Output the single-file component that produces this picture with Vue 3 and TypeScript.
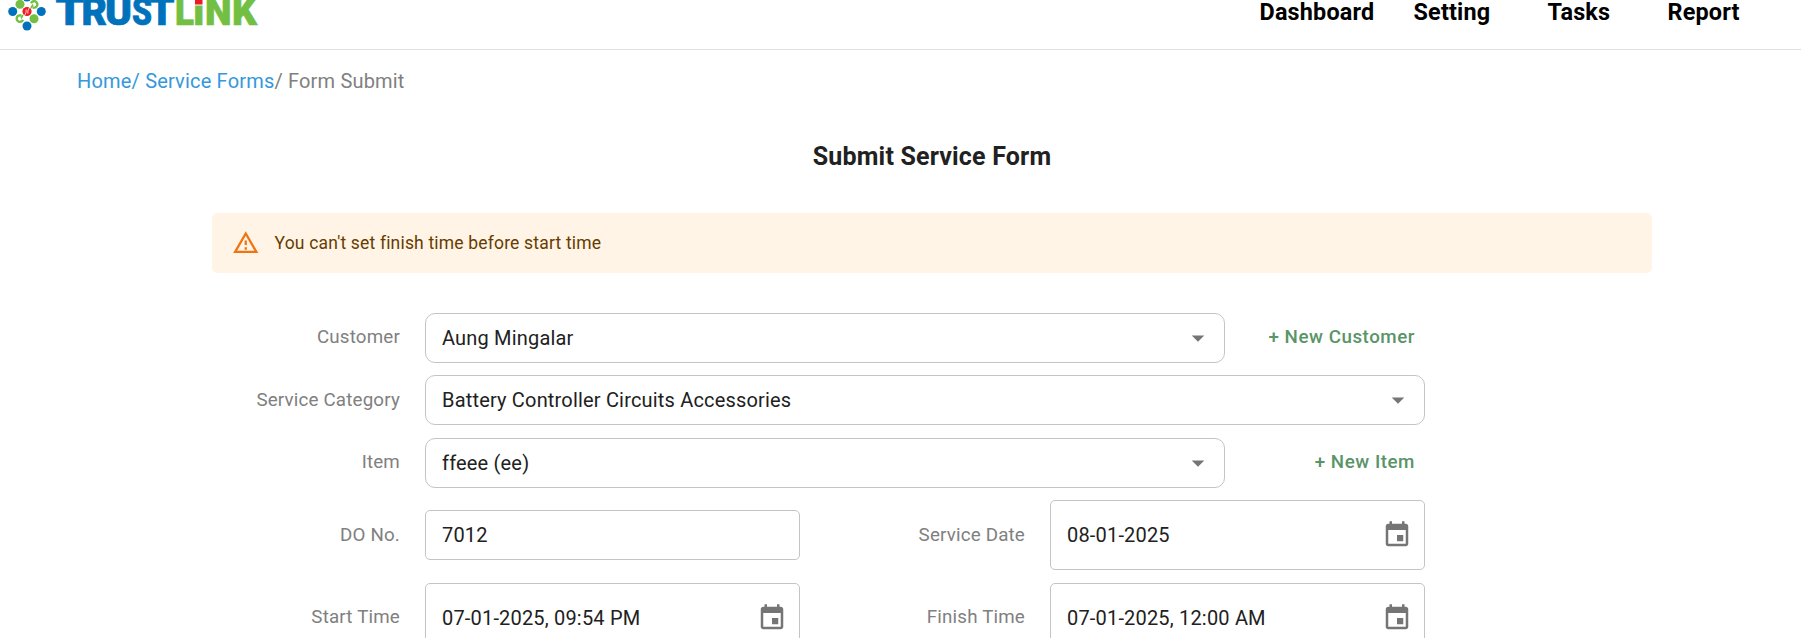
<script setup lang="ts">
interface NavItem {
  label: string
  slug: string
}

const navItems: NavItem[] = [
  { label: 'Dashboard', slug: 'dashboard' },
  { label: 'Setting', slug: 'setting' },
  { label: 'Tasks', slug: 'tasks' },
  { label: 'Report', slug: 'report' },
]

interface LogoLetter {
  char: string
  x: number
  width: number
  color: string
}

const blue = '#0072bc'
const green = '#72bf44'

const logoLetters: LogoLetter[] = [
  { char: 'T', x: 55.5, width: 28.5, color: blue },
  { char: 'R', x: 81.5, width: 25.5, color: blue },
  { char: 'U', x: 105, width: 27, color: blue },
  { char: 'S', x: 132, width: 20, color: blue },
  { char: 'T', x: 149.5, width: 25, color: blue },
  { char: 'L', x: 175, width: 19, color: green },
  { char: 'I', x: 193, width: 11.5, color: green },
  { char: 'N', x: 205, width: 26.5, color: green },
  { char: 'K', x: 232, width: 25, color: green },
]

interface SelectRow {
  label: string
  value: string
  action?: string
}

const selectRows: SelectRow[] = [
  { label: 'Customer', value: 'Aung Mingalar', action: '+ New Customer' },
  { label: 'Service Category', value: 'Battery Controller Circuits Accessories' },
  { label: 'Item', value: 'ffeee (ee)', action: '+ New Item' },
]

interface Field {
  label: string
  value: string
  picker: boolean
}

const fieldRows: Field[][] = [
  [
    { label: 'DO No.', value: '7012', picker: false },
    { label: 'Service Date', value: '08-01-2025', picker: true },
  ],
  [
    { label: 'Start Time', value: '07-01-2025, 09:54 PM', picker: true },
    { label: 'Finish Time', value: '07-01-2025, 12:00 AM', picker: true },
  ],
]

const eventIcon =
  'M17 12h-5v5h5v-5zM16 1v2H8V1H6v2H5c-1.11 0-1.99.9-1.99 2L3 19c0 1.1.89 2 2 2h14c1.1 0 2-.9 2-2V5c0-1.1-.9-2-2-2h-1V1h-2zm3 18H5V8h14v11z'
</script>

<template>
  <div class="page">
    <header class="topbar">
      <svg class="logo" width="270" height="40" viewBox="0 0 270 40">
        <g :fill="blue">
          <circle cx="27" cy="-3" r="4.5" />
          <circle cx="12.7" cy="11.5" r="4.5" />
          <circle cx="41.3" cy="11.5" r="4.5" />
          <circle cx="27" cy="26" r="4.5" />
        </g>
        <g :fill="green">
          <circle cx="20" cy="4.3" r="4.5" />
          <circle cx="34" cy="18.700" r="4.5" />
        </g>
        <g :stroke="green" stroke-width="2.4" fill="none">
          <path d="M31 3.200A3.300 3.300 0 1 1 35.500 7.400L32.500 7.800" />
          <path d="M23 19.800A3.300 3.300 0 1 1 18.500 15.600L21.500 15.200" />
          <path d="M33 4.500L31 8M21 18.500L23 15" stroke-width="1.6" />
        </g>
        <circle cx="27" cy="11.5" r="4.6" fill="#ed1c24" />
        <path d="M24.500 15.500Q26.500 13 26.300 9.500M29.500 7.500Q27.500 10 27.800 13.500" fill="none" stroke="#fff" stroke-opacity="0.75" stroke-width="1" />
        <g class="wordmark">
          <text
            v-for="letter in logoLetters"
            :key="letter.x"
            :x="letter.x"
            y="25.200"
            :textLength="letter.width"
            lengthAdjust="spacingAndGlyphs"
            :fill="letter.color"
            :stroke="letter.color"
          >{{ letter.char }}</text>
        </g>
        <rect x="193.500" y="0" width="10" height="5.500" fill="#fff" />
        <rect x="195" y="0" width="7.500" height="4.500" fill="#ed1c24" />
      </svg>
      <nav class="nav">
        <a v-for="item in navItems" :key="item.slug" :class="['nav-item', item.slug]">{{ item.label }}</a>
      </nav>
    </header>

    <div class="breadcrumb"><a>Home/</a>&nbsp;<a>Service Forms</a>/ Form Submit</div>

    <main class="content">
      <h1 class="title">Submit Service Form</h1>

      <div class="alert">
        <svg class="alert-icon" viewBox="0 0 24 24">
          <path d="M12 5.990L19.530 19H4.470L12 5.990M12 2L1 21h22L12 2zm1 14h-2v2h2v-2zm0-6h-2v4h2v-4z" />
        </svg>
        <span>You can't set finish time before start time</span>
      </div>

      <form class="form">
        <div v-for="row in selectRows" :key="row.label" class="row">
          <label class="label">{{ row.label }}</label>
          <div class="control select">
            <span>{{ row.value }}</span>
            <svg class="icon" viewBox="0 0 24 24"><path d="M7 10l5 5 5-5z" /></svg>
          </div>
          <a v-if="row.action" class="action">{{ row.action }}</a>
        </div>

        <div v-for="(fields, i) in fieldRows" :key="i" class="row pair">
          <template v-for="field in fields" :key="field.label">
            <label class="label">{{ field.label }}</label>
            <div :class="['control', { picker: field.picker }]">
              <span>{{ field.value }}</span>
              <svg v-if="field.picker" class="icon" viewBox="0 0 24 24"><path :d="eventIcon" /></svg>
            </div>
          </template>
        </div>
      </form>
    </main>
  </div>
</template>

<style>
body {
  overflow: hidden;
}
</style>

<style scoped>
.page {
  box-sizing: border-box;
  width: 1801px;
  height: 638px;
  overflow: hidden;
  background: #fff;
  font-family: Roboto, "Liberation Sans", sans-serif;
  font-size: 20px;
  letter-spacing: 0.18px;
  color: #212121;
}
.topbar {
  box-sizing: border-box;
  height: 50px;
  border-bottom: 1px solid #e0e0e0;
  display: flex;
  justify-content: space-between;
}
.logo {
  display: block;
}
.wordmark {
  font-size: 38px;
  font-weight: 900;
  letter-spacing: 0;
  stroke-width: 0.7px;
}
.nav {
  display: flex;
  width: 541.500px;
  height: 24px;
  line-height: 24px;
  font-size: 23.400px;
  font-weight: 700;
  color: #000;
}
.dashboard {
  width: 154px;
}
.setting {
  width: 134px;
}
.tasks {
  width: 120px;
}
.breadcrumb {
  margin: 16px 0 0 77px;
  height: 30px;
  line-height: 30px;
  color: #808080;
}
.breadcrumb a {
  color: #3498db;
}
.content {
  padding: 0 149px 0 212px;
}
.title {
  margin: 42px 0 0;
  height: 38px;
  line-height: 38px;
  font-size: 25px;
  font-weight: 700;
  text-align: center;
}
.alert {
  box-sizing: border-box;
  display: flex;
  align-items: center;
  gap: 15px;
  height: 60px;
  margin-top: 37px;
  padding: 0 20px;
  border-radius: 5px;
  background: #fff4e5;
  color: #663c00;
  font-size: 17.500px;
}
.alert-icon {
  width: 27.500px;
  height: 27.500px;
  fill: #ef7414;
}
.form {
  display: flex;
  flex-direction: column;
  gap: 12.500px;
  margin-top: 39.500px;
  padding-left: 13px;
}
.row {
  display: grid;
  grid-template-columns: 175px 800px 175px;
  column-gap: 25px;
  align-items: center;
}
.row:nth-child(2) {
  grid-template-columns: 175px 1000px;
}
.row.pair {
  grid-template-columns: 175px 375px 200px 375px;
}
.label {
  text-align: right;
  color: #808080;
  font-size: 18.750px;
  line-height: 26px;
  padding-bottom: 2px;
}
.row:nth-child(even) .label {
  padding-bottom: 1px;
}
.control {
  box-sizing: border-box;
  display: flex;
  align-items: center;
  justify-content: space-between;
  height: 50px;
  padding: 0 12px 0 16px;
  border: 1px solid #c4c4c4;
  border-radius: 5px;
}
.select {
  padding-right: 11px;
  border-radius: 10px;
}
.picker {
  height: 70px;
}
.icon {
  width: 30px;
  height: 30px;
  fill: #757575;
}
.action {
  text-align: right;
  padding: 0 0 2px;
  margin-right: 10px;
  color: #5a9468;
  font-size: 18.750px;
  font-weight: 500;
  letter-spacing: 0.540px;
}
</style>
